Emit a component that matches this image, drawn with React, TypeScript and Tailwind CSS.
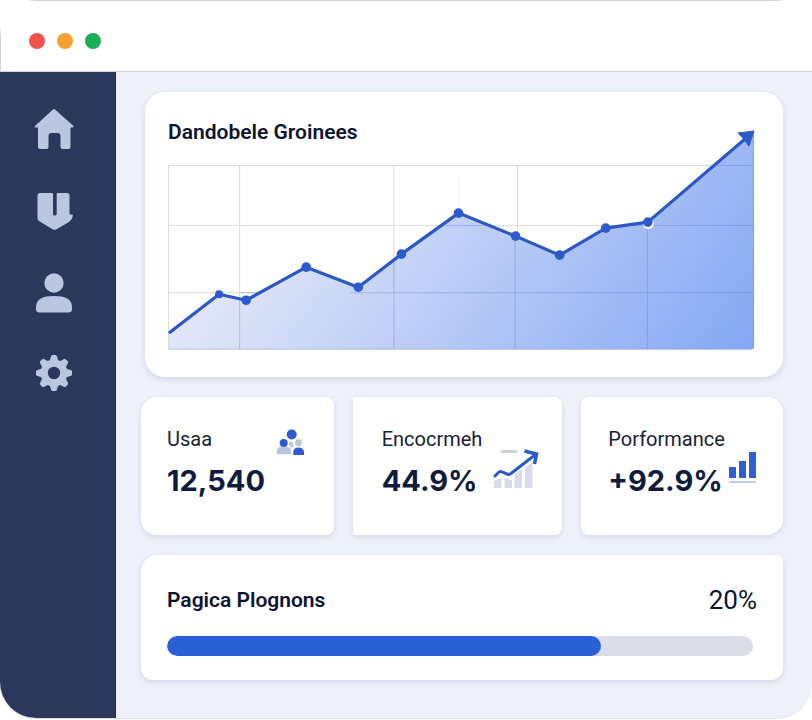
import React from 'react';

const POINTS: [number, number][] = [
  [51, 129], [78, 135], [138, 102], [190, 122], [233, 89],
  [290, 48], [347, 71], [391, 90], [437, 63], [479, 57],
];

const LINE = [[2, 167], ...POINTS].map((p) => p.join(',')).join(' ');

// ── Sidebar icons ────────────────────────────────────────────────────────────
const HomeIcon = () => (
  <svg viewBox="0 0 40 40" className="size-10" fill="currentColor">
    <path d="M19 .5Q20 -.4 21 .5L39 16.5Q40.5 18.5 38.5 18.5H36.500V38Q36.500 40 34.500 40H28.500Q26.500 40 26.500 38V27Q26.500 24 23.500 24H17.500Q14.500 24 14.500 27V38Q14.500 40 12.500 40H6Q4 40 4 38V18.500H2Q-.5 18.500 1.500 16.500Z" />
  </svg>
);

const ShieldIcon = () => (
  <svg viewBox="0 0 40 40" className="size-10" fill="currentColor">
    <path d="M6 2H18Q19 2 19 3V23Q19 24.500 20.800 24.500Q22.700 24.500 22.700 23V3Q22.700 2 23.700 2H33Q35.500 2 35.500 4.500V23.500H38Q39 23.500 38.800 25Q38.300 28.500 35 31L22.500 38.300Q20.500 39.300 18.500 38.300L5 30Q3.500 29 3.500 27V4.500Q3.500 2 6 2Z" />
  </svg>
);

const UserIcon = () => (
  <svg viewBox="0 0 40 40" className="size-10" fill="currentColor">
    <circle cx="20" cy="10" r="9.700" />
    <path d="M2 36V34C2 26 9 23 20 23S38 26 38 34V36Q38 39.500 34.500 39.500H5.500Q2 39.500 2 36Z" />
  </svg>
);

const GearIcon = () => (
  <svg viewBox="0 2 40 40" className="size-10" fill="currentColor">
    <defs>
      <mask id="gear-hole">
        <rect width="40" height="40" fill="#fff" />
        <circle cx="20" cy="20" r="6.200" fill="#000" />
      </mask>
    </defs>
    <g mask="url(#gear-hole)">
      <circle cx="20" cy="20" r="13.500" />
      {[0, 45, 90, 135, 180, 225, 270, 315].map((a) => (
        <path
          key={a}
          d="M15.500 8.500L17 3.500Q17.300 2 18.500 2H21.500Q22.700 2 23 3.500L24.500 8.500Z"
          transform={`rotate(${a} 20 20)`}
        />
      ))}
    </g>
  </svg>
);

// ── Stat icons ───────────────────────────────────────────────────────────────
const UsersStatIcon = () => (
  <svg width="27" height="27" viewBox="0 0 27 27">
    <circle cx="6.700" cy="14" r="4" fill="#2c5bcf" />
    <ellipse cx="14.300" cy="15.500" rx="2" ry="3.200" fill="#bcc4de" transform="rotate(-25 14.300 15.500)" />
    <circle cx="21.500" cy="13.700" r="3.400" fill="#bcc4de" />
    <circle cx="14.700" cy="5.500" r="5" fill="#2c5bcf" />
    <path d="M0 25.300V21.500Q0 18 3.500 18H10.500Q14 18 14 21.500V25.300Z" fill="#bcc4de" />
    <path d="M16.300 26V22.500Q17 18.500 21.500 18.500T27 22.500V26Z" fill="#2c5bcf" />
  </svg>
);

const TrendStatIcon = () => (
  <svg width="46" height="43" viewBox="0 0 46 43">
    <path d="M8 3H24V6H8Z" fill="#ced1e3" />
    <path d="M1 34L8.500 31V41H1ZM11.500 31L19 33V41H11.500ZM21.500 28L29 22V41H21.500ZM32 21L39.500 15V41H32Z" fill="#d9dbea" />
    <path d="M2 29L6 25Q7 24 9 25L14 27Q16.500 28 18 26.500L42.500 7.500" fill="none" stroke="#2c5bc8" strokeWidth="3" strokeLinecap="round" />
    <path d="M31.500 4L43.500 7L41.500 17" fill="none" stroke="#2c5bc8" strokeWidth="3.500" />
  </svg>
);

const BarsStatIcon = () => (
  <svg width="29" height="33" viewBox="0 0 29 33">
    <path d="M1 16H8V27H1ZM11 10H18V27H11ZM21 1H28V27H21Z" fill="#2f5fd0" />
    <path d="M1 30H28V32H1Z" fill="#c5cae2" />
  </svg>
);

const NAV = [
  { label: 'Home', icon: <HomeIcon /> },
  { label: 'Security', icon: <ShieldIcon /> },
  { label: 'Profile', icon: <UserIcon /> },
  { label: 'Settings', icon: <GearIcon /> },
];

const STATS = [
  {
    label: 'Usaa', value: '12,540', icon: <UsersStatIcon />,
    card: 'rounded-l-2xl rounded-r-lg pl-[26px] pr-[30px]', iconPos: 'mt-1',
  },
  {
    label: 'Encocrmeh', value: '44.9%', icon: <TrendStatIcon />,
    card: 'rounded-l-sm rounded-r-lg pl-[29px] pr-[23px]', iconPos: 'mt-[22px]',
  },
  {
    label: 'Porformance', value: '+92.9%', icon: <BarsStatIcon />,
    card: 'rounded-l-lg rounded-r-2xl pl-[27px] pr-[26px]', iconPos: 'mt-[26px]',
  },
];

function GrowthChart() {
  return (
    <svg viewBox="0 0 586 185" className="block w-full overflow-visible" role="img" aria-label="Growth chart">
      <defs>
        <linearGradient id="area" gradientUnits="userSpaceOnUse" x1="130" y1="20" x2="520" y2="300">
          <stop offset="0" stopColor="#dfe5f7" />
          <stop offset="0.5" stopColor="#b0c5f6" />
          <stop offset="1" stopColor="#82a5f3" />
        </linearGradient>
      </defs>
      <path d="M.5 .5H585M.5 60.500H585M.5 127.500H585M.5 .5V184M71.500 .5V184M225.500 .5V184M349 .5V72" stroke="#d9dbdf" fill="none" />
      <path d="M290.500 12V42" stroke="#efeff2" />
      <path d={`M1 184V168L${LINE} 585,-34V181Q585 184 582 184Z`} fill="url(#area)" />
      <path
        d="M71 127.500H94M182 127.500H585M274 60.500H320M443 60.500H585M546 .5H585M71.500 134V184M225.500 96V184M346.500 72V184M478.500 58V184M.5 184H582Q584.500 184 584.500 181V-33"
        stroke="#6485cc"
        strokeOpacity="0.4"
        fill="none"
      />
      <circle cx="479.500" cy="58.500" r="5.500" fill="#fff" />
      <polyline points={`${LINE} 576,-26`} fill="none" stroke="#2c58c6" strokeWidth="3.200" strokeLinejoin="round" strokeLinecap="round" />
      {POINTS.map(([x, y], i) => (
        <circle key={x} cx={x} cy={y} r={i === 0 ? 4 : 4.800} fill="#2d5bcd" />
      ))}
      <path d="M585 -34L569 -32L574 -27L580 -19Z" fill="#2c5bcc" stroke="#2c5bcc" strokeLinejoin="round" />
    </svg>
  );
}

export default function App() {
  return (
    <div className="flex min-h-screen flex-col bg-white pb-0.5 font-['Roboto','Liberation_Sans',sans-serif] text-[#0d1530]">
      <div className="flex flex-1 flex-col overflow-hidden rounded-[36px] shadow-[0_1px_0_#dcdfe9]">
        {/* ── Window bar ─────────────────────────────────────────────────────── */}
        <header className="flex h-[72px] items-center gap-3 border-t border-b border-l border-[#d3d4da] bg-white px-7 pt-[10px]">
          <span className="size-4 rounded-full bg-[#ef5350]" />
          <span className="size-4 rounded-full bg-[#f6a132]" />
          <span className="size-4 rounded-full bg-[#1aae54]" />
        </header>

        <div className="flex flex-1">
          {/* ── Sidebar ──────────────────────────────────────────────────────── */}
          <nav className="flex w-[116px] shrink-0 flex-col gap-[42px] border-r border-[#1e2a52] bg-[#2b385b] pt-[37px] pl-[34px] text-[#bcc6e1]">
            {NAV.map((item) => (
              <button key={item.label} type="button" aria-label={item.label} className="size-10">
                {item.icon}
              </button>
            ))}
          </nav>

          {/* ── Content ──────────────────────────────────────────────────────── */}
          <main className="flex min-w-0 flex-1 flex-col gap-5 bg-[#eff1fa] pt-5 pr-[29px] pb-9 pl-[25px]">
            <section className="ml-1 rounded-[20px] bg-white pt-6 pr-7 pb-[27px] pl-[23px] shadow-[0_2px_6px_#cfd4e6]">
              <h2 className="mb-[17px] text-[21px] leading-8 font-semibold">Dandobele Groinees</h2>
              <GrowthChart />
            </section>

            <div className="grid grid-cols-[193fr_210fr_202fr] gap-[19px]">
              {STATS.map((s) => (
                <section key={s.label} className={`flex min-w-0 justify-between bg-white pt-7 pb-[34px] shadow-[0_2px_6px_#d3d8e8] ${s.card}`}>
                  <div>
                    <h3 className="text-[20px] leading-7 font-normal text-[#1a2036]">{s.label}</h3>
                    <p className="mt-2 font-['Inter','Liberation_Sans',sans-serif] text-[29px] leading-10 font-bold text-[#111b40]">{s.value}</p>
                  </div>
                  <div className={`shrink-0 ${s.iconPos}`}>{s.icon}</div>
                </section>
              ))}
            </div>

            <section className="rounded-tl-2xl rounded-tr-md rounded-b-xl bg-white pt-[29px] pr-[26px] pb-6 pl-[26px] shadow-[0_2px_6px_#cfd4e6]">
              <div className="flex items-center justify-between">
                <h2 id="progress-title" className="text-[21px] leading-8 font-semibold">Pagica Plognons</h2>
                <span className="text-[26px] leading-8 font-normal">20%</span>
              </div>
              <div role="progressbar" aria-labelledby="progress-title" aria-valuenow={74} className="mt-5 mr-1 h-5 overflow-hidden rounded-full bg-[#dbdde8]">
                <div className="h-full w-[74%] rounded-full bg-[#2b5fd5]" />
              </div>
            </section>
          </main>
        </div>
      </div>
    </div>
  );
}
